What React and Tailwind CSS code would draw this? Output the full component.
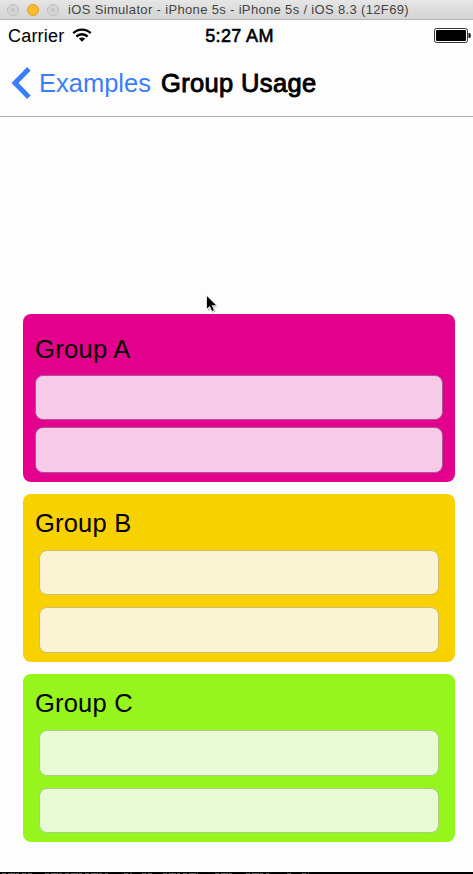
const groups = [
  {
    name: 'Group A',
    card: 'bg-[#e2008c]',
    label: 'h-[61px] pt-[21px] tracking-[0.3px]',
    fields: 'mx-3 gap-[7px]',
    field: 'bg-[#f7cbe8] border-[#b0559b]',
    heights: ['h-[45px]', 'h-[46px]'],
  },
  {
    name: 'Group B',
    card: 'bg-[#f8d200]',
    label: 'h-14 pt-[15px] tracking-[0.2px]',
    fields: 'mx-4 gap-3',
    field: 'bg-[#fbf4d4] border-[#cdbd70]',
    heights: ['h-[45px]', 'h-[46px]'],
  },
  {
    name: 'Group C',
    card: 'bg-[#95f51c]',
    label: 'h-14 pt-[15px] tracking-[0.2px]',
    fields: 'mx-4 gap-3',
    field: 'bg-[#e9fbd6] border-[#a9cd83]',
    heights: ['h-[46px]', 'h-[45px]'],
  },
];

function TitleBar() {
  return (
    <header className="flex h-5 shrink-0 items-center border-b border-[#b4b4b4] bg-linear-to-b from-[#e6e6e6] to-[#d4d4d4]">
      <div className="ml-[7px] flex gap-2">
        <span className="flex size-3 items-center justify-center rounded-full border border-[#bcbcbc] bg-[#d6d6d6]">
          <span className="size-1 rounded-full bg-[#c5c5c5]" />
        </span>
        <span className="size-3 rounded-full border border-[#dfa023] bg-[#fdbc2e]" />
        <span className="flex size-3 items-center justify-center rounded-full border border-[#bcbcbc] bg-[#d6d6d6]">
          <span className="size-1 rounded-full bg-[#c5c5c5]" />
        </span>
      </div>
      <h1 className="ml-[9px] whitespace-nowrap text-[13px] leading-none tracking-[0.34px] text-[#444]">
        iOS Simulator - iPhone 5s - iPhone 5s / iOS 8.3 (12F69)
      </h1>
    </header>
  );
}

function StatusBar() {
  return (
    <div className="grid h-8 grid-cols-3 items-center text-lg leading-none">
      <div className="flex items-center pl-2">
        <span className="tracking-[0.2px]">Carrier</span>
        <svg className="ml-2 -mt-0.5" width="20" height="14" viewBox="0 0 20 14" fill="none" stroke="#000" strokeWidth="2.4">
          <path d="M1.3 5.1C6.2.4 13.8.4 18.7 5.1" />
          <path d="M4.4 8.5c3.2-3 8-3 11.2 0" />
          <path d="M6.8 10.6c1.8-1.6 4.6-1.6 6.4 0L10 13.8z" fill="#000" stroke="none" />
        </svg>
      </div>
      <span className="whitespace-nowrap pl-1.5 text-center tracking-[0.35px] [-webkit-text-stroke:0.6px_#000]">5:27 AM</span>
      <svg className="justify-self-end mr-0.5 -mt-0.5" width="37" height="15" viewBox="0 0 37 15">
        <rect x="0.5" y="0.5" width="33" height="14" rx="2" fill="#fff" stroke="#333" />
        <rect x="2" y="2" width="30" height="11" rx="0.7" fill="#000" />
        <path d="M34.5 5h1q1.3 0 1.3 2.5T35.5 10h-1z" fill="#111" />
      </svg>
    </div>
  );
}

function NavBar() {
  return (
    <nav className="flex h-[65px] items-center border-b border-[#b2b2b2] pl-[11px] text-[25.5px] leading-none">
      <svg className="-mt-0.5" width="21" height="32" viewBox="0 0 21 32" fill="none" stroke="#3b7dff" strokeWidth="5">
        <path d="M17.9 1.8 4 16l13.9 14.2" />
      </svg>
      <span className="ml-[7px] text-[#3b7dff]">Examples</span>
      <h2 className="ml-[10px] whitespace-nowrap tracking-[0.35px] [-webkit-text-stroke:0.9px_#000]">Group Usage</h2>
    </nav>
  );
}

export default function App() {
  return (
    <div className="relative flex h-[874px] w-[473px] flex-col overflow-hidden bg-[#fdfdfd] font-['Liberation_Sans',Arial,sans-serif] text-black">
      <TitleBar />
      <StatusBar />
      <NavBar />
      <main className="ml-[23px] mt-[197px] flex w-[432px] flex-1 flex-col gap-3">
        {groups.map((g) => (
          <section key={g.name} className={`h-[168px] rounded-lg ${g.card}`}>
            <h3 className={`pl-3 text-[25.5px] leading-7 ${g.label}`}>{g.name}</h3>
            <div className={`flex flex-col ${g.fields}`}>
              {g.heights.map((height, i) => (
                <input key={i} aria-label={`${g.name} ${i + 1}`} className={`w-full rounded-lg border outline-none ${height} ${g.field}`} />
              ))}
            </div>
          </section>
        ))}
      </main>
      <svg className="shrink-0 bg-black" width="473" height="2" viewBox="0 0 473 2" stroke="#555">
        <path d="M2 1.5H32M45 1.5H108M124 1.5h8M142 1.5h10M163 1.5h35M215 1.5h17M246 1.5h23M287 1.5h5M302 1.5h7" strokeDasharray="4 2 7 1 3 3" />
      </svg>
      <svg className="absolute left-[205px] top-[294px]" width="14" height="20" viewBox="0 0 14 20">
        <path d="M3 4v13.5l2.5-2 2 3.5 3.5-1.4-1.8-4.2h3.5z" fill="#ccc" />
        <path d="M1.5 1.2v14.3l3.2-3 2.2 5 2.5-1-2.1-4.8h4.8z" fill="#000" stroke="#fff" strokeWidth="0.8" />
      </svg>
    </div>
  );
}
